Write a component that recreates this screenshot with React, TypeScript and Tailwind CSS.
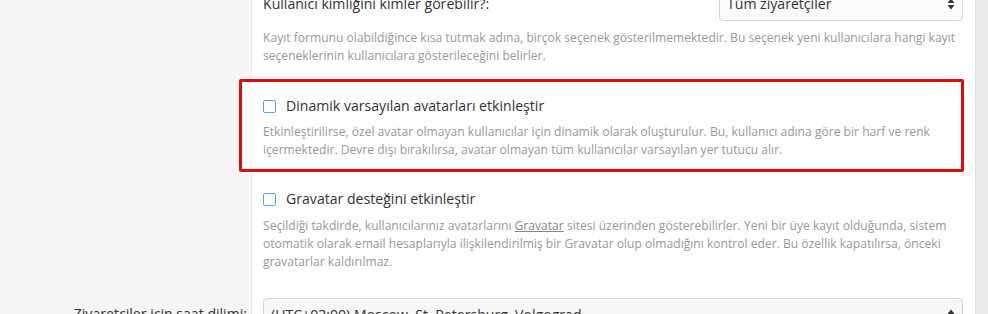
import React from 'react'

const font = { fontFamily: '"Open Sans", "Noto Sans", "Liberation Sans", sans-serif' }

function SortArrows() {
  return (
    <svg width="8" height="12" viewBox="0 0 8 12" className="shrink-0">
      <path d="M4 0.5 L7.5 5 H0.5 Z" fill="#333" />
      <path d="M4 11.5 L7.5 7 H0.5 Z" fill="#333" />
    </svg>
  )
}

function Checkbox() {
  return (
    <span className="block h-[13px] w-[13px] shrink-0 rounded-[2px] border-[1.5px] border-[#5aa3db] bg-white" />
  )
}

export default function App() {
  return (
    <div
      className="flex h-[314px] w-[988px] overflow-hidden bg-white text-[#333]"
      style={font}
    >
      <div className="flex flex-1 flex-col">
        {/* Kayıt ayarları */}
        <div className="flex">
          <div className="w-[252px] shrink-0 border-r border-[#e8e8e8] bg-[#f5f5f5]" />
          <div className="flex-1 pl-[11px] pr-[12px]">
            <div className="-mt-[13px] flex h-[34px] items-center justify-between">
              <span className="text-[14.1px]">Kullanıcı kimliğini kimler görebilir?:</span>
              <div className="flex h-[34px] w-[244px] items-center justify-between rounded-[4px] border border-[#d6d6d6] bg-[#fbfbfb] pl-[7px] pr-[7px]">
                <span className="text-[14.1px]">Tüm ziyaretçiler</span>
                <SortArrows />
              </div>
            </div>
            <p className="mt-[8px] whitespace-nowrap text-[12.1px] leading-[18px] text-[#999]">
              Kayıt formunu olabildiğince kısa tutmak adına, birçok seçenek gösterilmemektedir. Bu seçenek yeni kullanıcılara hangi kayıt
              <br />
              seçeneklerinin kullanıcılara gösterileceğini belirler.
            </p>

            <div className="relative z-10 -ml-[24px] -mr-[1px] mt-[14px] rounded-[2px] border-[3px] border-[#e00b0b] bg-white pb-[10px] pl-[21px] pr-[4px] pt-[14px]">
              <label className="flex h-[20px] items-center gap-[10px]">
                <Checkbox />
                <span className="text-[14.1px]">Dinamik varsayılan avatarları etkinleştir</span>
              </label>
              <p className="mt-[7px] whitespace-nowrap text-[12.1px] leading-[18px] text-[#999]">
                Etkinleştirilirse, özel avatar olmayan kullanıcılar için dinamik olarak oluşturulur. Bu, kullanıcı adına göre bir harf ve renk
                <br />
                içermektedir. Devre dışı bırakılırsa, avatar olmayan tüm kullanıcılar varsayılan yer tutucu alır.
              </p>
            </div>

            <label className="mt-[17px] flex h-[20px] items-center gap-[10px]">
              <Checkbox />
              <span className="text-[14.1px]">Gravatar desteğini etkinleştir</span>
            </label>
            <p className="mt-[8px] whitespace-nowrap pb-[27px] text-[12.1px] leading-[18px] text-[#999]">
              Seçildiği takdirde, kullanıcılarınız avatarlarını <a className="text-[#888] underline">Gravatar</a> sitesi üzerinden gösterebilirler. Yeni bir üye kayıt olduğunda, sistem
              <br />
              otomatik olarak email hesaplarıyla ilişkilendirilmiş bir Gravatar olup olmadığını kontrol eder. Bu özellik kapatılırsa, önceki
              <br />
              gravatarlar kaldırılmaz.
            </p>
          </div>
        </div>

        {/* Saat dilimi */}
        <div className="flex flex-1">
          <div className="w-[252px] shrink-0 border-r border-[#e8e8e8] bg-[#f5f5f5] pr-[4px] pt-[5px] text-right text-[14.1px]">
            Ziyaretçiler için saat dilimi:
          </div>
          <div className="flex-1 pl-[11px] pr-[12px]">
            <div className="flex h-[34px] items-center justify-between rounded-[4px] border border-[#d6d6d6] bg-[#f7f7f7] pl-[7px] pr-[7px]">
              <span className="text-[14.1px]">(UTC+03:00) Moscow, St. Petersburg, Volgograd</span>
              <SortArrows />
            </div>
          </div>
        </div>
      </div>
      <div className="w-[13px] shrink-0 border-l border-[#e0e0e0] bg-[#ebebeb]" />
    </div>
  )
}
